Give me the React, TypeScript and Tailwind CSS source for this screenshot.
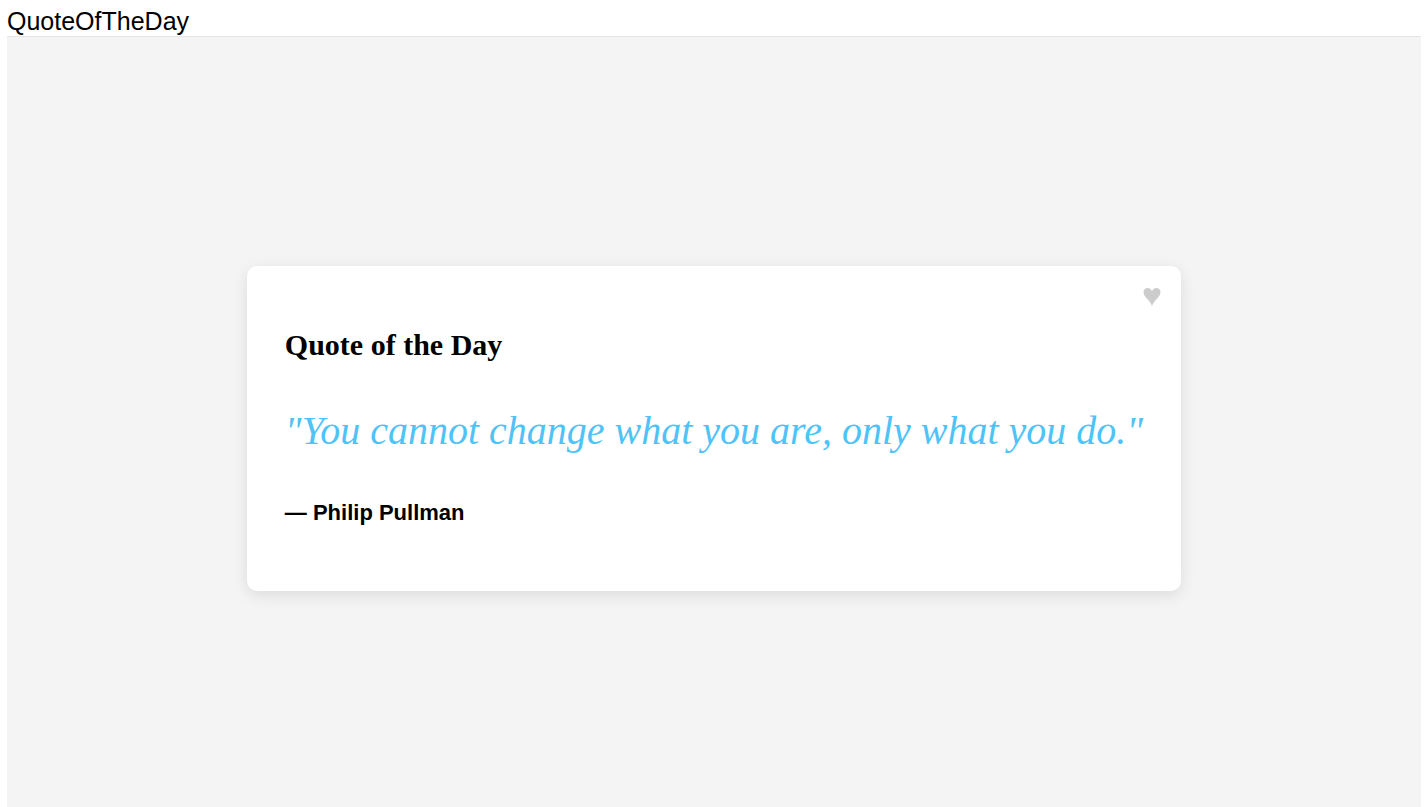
import { useState } from "react";

export default function App() {
  const [liked, setLiked] = useState(false);

  return (
    <div className="flex min-h-screen flex-col bg-white px-[7px] pt-[7px] text-black">
      <header className="font-['Liberation_Sans',Arial,sans-serif] text-[25px] leading-[29px]">
        QuoteOfTheDay
      </header>
      <main className="flex grow items-center justify-center border-t border-[#e6e6e6] bg-[#f4f4f4] pt-3">
        <article className="relative rounded-[10px] bg-white px-[38px] pt-[61px] pb-[64px] shadow-[0_4px_15px_rgba(0,0,0,0.1)]">
          <button
            type="button"
            aria-label="Favorite quote"
            aria-pressed={liked}
            onClick={() => setLiked(!liked)}
            className={`absolute top-[22px] right-5 cursor-pointer ${liked ? "text-red-500" : "text-[#cccccc]"}`}
          >
            <svg width="18" height="18" viewBox="0 0 18 18" fill="currentColor" aria-hidden="true">
              <path d="M9 18C8.2 15.4 6.5 13.2 3.9 10.4C1.6 7.9 0.5 6.4 0.5 4.2C0.5 1.7 2.2 0 4.6 0C6.8 0 8.3 1.3 9 3.2C9.7 1.3 11.2 0 13.4 0C15.8 0 17.5 1.7 17.5 4.2C17.5 6.4 16.4 7.9 14.1 10.4C11.5 13.2 9.8 15.4 9 18Z" />
            </svg>
          </button>
          <h1 className="font-['Liberation_Serif','Times_New_Roman',serif] text-[30px] leading-9 font-bold">
            Quote of the Day
          </h1>
          <blockquote className="mt-11 font-['Liberation_Serif','Times_New_Roman',serif] text-[40px] leading-[48px] text-[#4fc3f7] italic">
            "You cannot change what you are, only what you do."
          </blockquote>
          <p className="mt-11 font-['Liberation_Sans',Arial,sans-serif] text-[22px] leading-7 font-bold">
            — Philip Pullman
          </p>
        </article>
      </main>
    </div>
  );
}
